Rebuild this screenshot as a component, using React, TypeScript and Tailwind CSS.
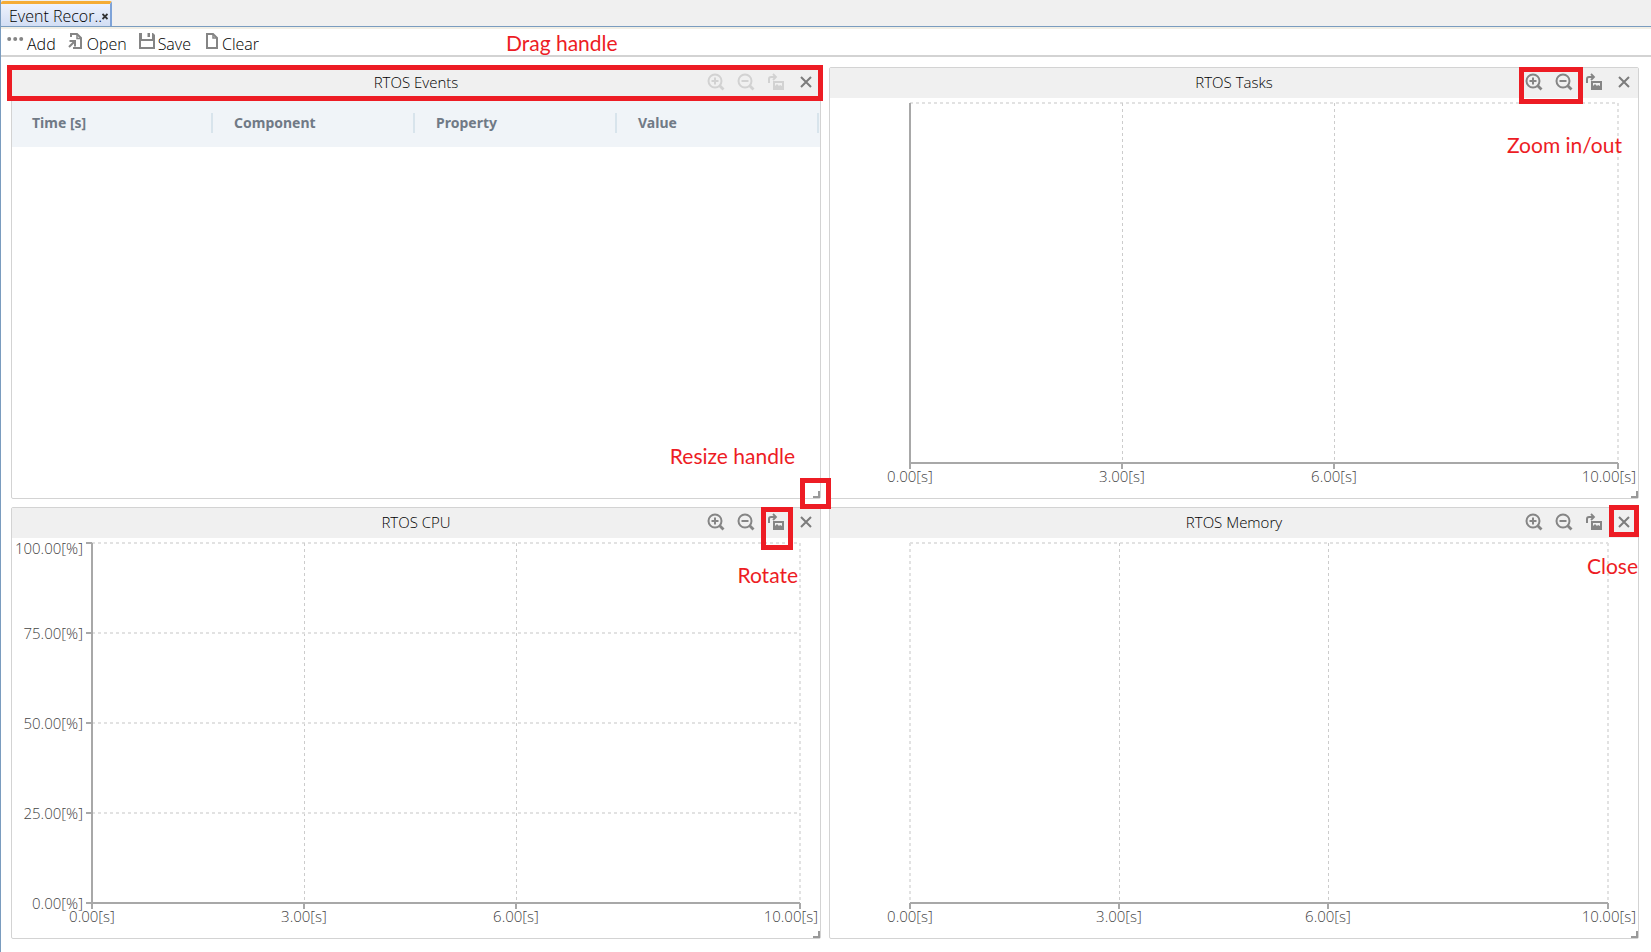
import React, { useLayoutEffect, useRef, useState } from "react";

const DotsIcon = () => (
  <svg width="17" height="18" viewBox="0 0 17 18" fill="#858585" aria-hidden="true">
    <circle cx="2.200" cy="7" r="2" />
    <circle cx="8.200" cy="7" r="2" />
    <circle cx="14.200" cy="7" r="2" />
  </svg>
);

const OpenIcon = () => (
  <svg width="16" height="18" viewBox="0 0 16 18" fill="none" stroke="#858585" strokeWidth="2" aria-hidden="true">
    <path d="M3 5V2h6l4 4v10H5" />
    <path d="M9 2v4.500h4" strokeWidth="1.500" />
    <path d="M1 15l6-6M1.500 9H7v5.500" />
  </svg>
);

const SaveIcon = () => (
  <svg width="16" height="18" viewBox="0 0 16 18" fill="#858585" aria-hidden="true">
    <path fillRule="evenodd" d="M0 1h3v6h10V1h1l2 2v14H0zM2 9v6h12V9z" />
    <path d="M8.500 1h2.500v4H8.500z" />
  </svg>
);

const FileIcon = () => (
  <svg width="16" height="18" viewBox="0 0 16 18" fill="none" stroke="#858585" strokeWidth="2" aria-hidden="true">
    <path d="M4 2h6l4 4v10H4z" />
    <path d="M10 2v4h4" strokeWidth="1.500" />
  </svg>
);

const ZoomIcon = ({ plus }: { plus?: boolean }) => (
  <svg width="18" height="18" viewBox="0 0 18 18" fill="none" stroke="currentColor" aria-hidden="true">
    <circle cx="8" cy="8" r="6.500" strokeWidth="2" />
    <path d="M12.500 12.500l4 4" strokeWidth="2.800" />
    <path d={plus ? "M4.500 8h7M8 4.500v7" : "M4.500 8h7"} strokeWidth="2" />
  </svg>
);

const RotateIcon = () => (
  <svg width="18" height="18" viewBox="0 0 18 18" fill="none" stroke="currentColor" aria-hidden="true">
    <path d="M2 10V6q0-2 2-2h4" strokeWidth="2" />
    <path d="M6 1l3 3-3 3" strokeWidth="1.800" />
    <path fill="currentColor" stroke="none" fillRule="evenodd" d="M6 8h11v9H6zM8 10v5h7v-5z" />
    <path fill="currentColor" stroke="none" d="M8 15v-2l2-2 2 2 1-1 2 1v2z" />
  </svg>
);

const CloseIcon = () => (
  <svg width="18" height="18" viewBox="0 0 18 18" fill="none" stroke="#7c7c7c" strokeWidth="2" aria-hidden="true">
    <path d="M4 4l10 10M14 4L4 14" />
  </svg>
);

function ToolButton({ icon, label }: { icon: React.ReactNode; label: string }) {
  return (
    <button type="button" className="flex items-start gap-[3px]">
      {icon}
      <span className="pt-0.5 leading-5">{label}</span>
    </button>
  );
}

const Mark = ({ className }: { className: string }) => (
  <span className={`pointer-events-none absolute z-10 border-5 border-[#ed1c24] ${className}`} />
);

const Note = ({ className, children }: { className: string; children: React.ReactNode }) => (
  <span
    className={`pointer-events-none absolute z-10 whitespace-nowrap font-['Lato',sans-serif] text-[21px] leading-6 font-normal text-[#ed1c24] ${className}`}
  >
    {children}
  </span>
);

type ChartProps = { rightGap: number; yLabels?: string[]; axis?: boolean };

function Chart({ rightGap, yLabels, axis }: ChartProps) {
  const box = useRef<HTMLDivElement>(null);
  const [size, setSize] = useState({ w: 0, h: 0 });

  useLayoutEffect(() => {
    const el = box.current;
    if (!el) return;
    const measure = () => setSize({ w: el.clientWidth, h: el.clientHeight });
    measure();
    const watcher = new ResizeObserver(measure);
    watcher.observe(el);
    return () => watcher.disconnect();
  }, []);

  const left = 80;
  const right = size.w - rightGap;
  const top = 5;
  const bottom = size.h - 35;
  const xs = [0, 0.3, 0.6, 1].map((f) => Math.floor(left + (right - left) * f));
  const xLabels = ["0.00[s]", "3.00[s]", "6.00[s]", "10.00[s]"];
  const rows = yLabels ?? [];
  const yAt = (i: number) => Math.round(top + ((bottom - top) * i) / 4);

  return (
    <div ref={box} className="min-h-0 flex-1 overflow-hidden">
      {size.w > 0 && (
        <svg width={size.w} height={size.h} className="block font-['Open_Sans',sans-serif] text-[15px]" fill="#444">
          <g stroke="#e2e2e2" strokeWidth="2" strokeDasharray="3 3">
            <path d={`M${left} ${top}H${right}`} />
            {xs.map((x, i) => (
              <path
                key={x}
                d={`M${i === 1 || i === 2 ? x + 0.5 : x} ${top}V${bottom}`}
                strokeWidth={i === 1 || i === 2 ? 1 : 2}
                stroke={i === 1 || i === 2 ? "#ccc" : "#e2e2e2"}
              />
            ))}
            {rows.slice(1, 4).map((label, i) => (
              <path key={label} d={`M${left} ${yAt(i + 1)}H${right}`} />
            ))}
          </g>
          <g stroke="#a8a8a8" strokeWidth="2">
            <path d={`M${left} ${bottom}H${right}`} />
            {axis && <path d={`M${left} ${top}V${bottom}`} />}
            {xs.map((x) => (
              <path key={x} d={`M${x} ${bottom}v6`} />
            ))}
            {rows.map((label, i) => (
              <path key={label} d={`M${left - 6} ${yAt(i)}h6`} />
            ))}
          </g>
          {xs.map((x, i) => (
            <text key={x} x={i === 3 ? size.w - 2 : x} y={bottom + 19} textAnchor={i === 3 ? "end" : "middle"}>
              {xLabels[i]}
            </text>
          ))}
          {rows.map((label, i) => (
            <text key={label} x={left - 9} y={yAt(i) + (i === 0 ? 11 : 6)} textAnchor="end">
              {label}
            </text>
          ))}
        </svg>
      )}
    </div>
  );
}

type PanelProps = { title: string; disabled?: boolean; children: React.ReactNode; marks?: React.ReactNode };

function Panel({ title, disabled, children, marks }: PanelProps) {
  const tone = disabled ? "text-[#d2d2d2]" : "text-[#858585]";
  return (
    <section className="relative flex min-w-0 flex-col rounded-xs border border-[#d3d3d3] bg-white">
      <header className="grid h-[30px] grid-cols-[1fr_auto_1fr] items-center bg-[#f0f0f0] pb-0.5">
        <h2 className="col-start-2 text-[15px] text-black">{title}</h2>
        <div className={`flex items-center justify-end gap-3 pr-[5px] ${tone}`}>
          <button type="button" aria-label="Zoom in" disabled={disabled}><ZoomIcon plus /></button>
          <button type="button" aria-label="Zoom out" disabled={disabled}><ZoomIcon /></button>
          <button type="button" aria-label="Rotate" disabled={disabled}><RotateIcon /></button>
          <button type="button" aria-label="Close"><CloseIcon /></button>
        </div>
      </header>
      {children}
      <span className="absolute right-0 bottom-0 size-[7px] cursor-se-resize border-r-2 border-b-2 border-[#999]" />
      {marks}
    </section>
  );
}

export default function App() {
  return (
    <main className="flex min-h-screen flex-col border-l border-[#7a9cbf] bg-white font-['Open_Sans',sans-serif] font-light text-black">
      <div className="flex h-[27px] items-end border-b border-[#7a9cbf] bg-[#f0f0f0]">
        <div role="tablist" className="flex h-[25px] w-[111px] items-center rounded-t-xs border-t-3 border-r-2 border-t-[#f5ac35] border-r-[#7ea3d8] bg-linear-to-b from-[#eef2fc] to-[#d2def4] pt-0.5 pl-2">
          <button type="button" role="tab" aria-selected="true" className="text-base leading-5 whitespace-nowrap">Event Recor..</button>
          <button type="button" aria-label="Close tab" className="shrink-0">
            <svg width="6" height="7" viewBox="0 0 6 7" fill="none" stroke="#333" strokeWidth="1.800" aria-hidden="true">
              <path d="M0.500 1l5 5M5.500 1l-5 5" />
            </svg>
          </button>
        </div>
      </div>
      <div className="relative flex h-[30px] items-start gap-3 border-t-2 border-b-2 border-t-[#f1efe6] border-b-[#d3d3d3] pt-[3px] pl-1.5 text-base">
        <ToolButton icon={<DotsIcon />} label="Add" />
        <ToolButton icon={<OpenIcon />} label="Open" />
        <ToolButton icon={<SaveIcon />} label="Save" />
        <ToolButton icon={<FileIcon />} label="Clear" />
        <Note className="top-0.5 left-[505px]">Drag handle</Note>
      </div>
      <div className="grid flex-1 grid-cols-2 grid-rows-2 gap-2 pt-2.5 pr-3 pb-[13px] pl-2.5">
        <Panel
          title="RTOS Events"
          disabled
          marks={
            <>
              <Mark className="-top-[3px] -right-[3px] -left-[5px] h-9" />
              <Mark className="-right-[11px] -bottom-[11px] size-[31px]" />
              <Note className="right-[25px] bottom-[30px]">Resize handle</Note>
            </>
          }
        >
          <table className="w-full table-fixed border-collapse bg-[#f0f4f8] font-['Noto_Sans',sans-serif] text-sm text-[#707a86]">
            <thead>
              <tr className="h-[49px]">
                {["Time [s]", "Component", "Property", "Value"].map((name) => (
                  <th key={name} scope="col" className="py-0 pr-px pl-5 text-left font-bold">
                    <div className="flex h-5 items-center justify-between">
                      {name}
                      <span className="h-full w-0.5 bg-[#d8e4ec]" />
                    </div>
                  </th>
                ))}
              </tr>
            </thead>
          </table>
        </Panel>
        <Panel
          title="RTOS Tasks"
          marks={
            <>
              <Mark className="-top-px right-[55px] h-[37px] w-16" />
              <Note className="top-[65px] right-[16px]">Zoom in/out</Note>
            </>
          }
        >
          <Chart rightGap={20} axis />
        </Panel>
        <Panel
          title="RTOS CPU"
          marks={
            <>
              <Mark className="-top-px right-[27px] h-[43px] w-8" />
              <Note className="top-[55px] right-[22px]">Rotate</Note>
            </>
          }
        >
          <Chart rightGap={20} axis yLabels={["100.00[%]", "75.00[%]", "50.00[%]", "25.00[%]", "0.00[%]"]} />
        </Panel>
        <Panel
          title="RTOS Memory"
          marks={
            <>
              <Mark className="-top-[3px] -right-px h-8 w-[30px]" />
              <Note className="top-[46px] right-0">Close</Note>
            </>
          }
        >
          <Chart rightGap={30} />
        </Panel>
      </div>
    </main>
  );
}
